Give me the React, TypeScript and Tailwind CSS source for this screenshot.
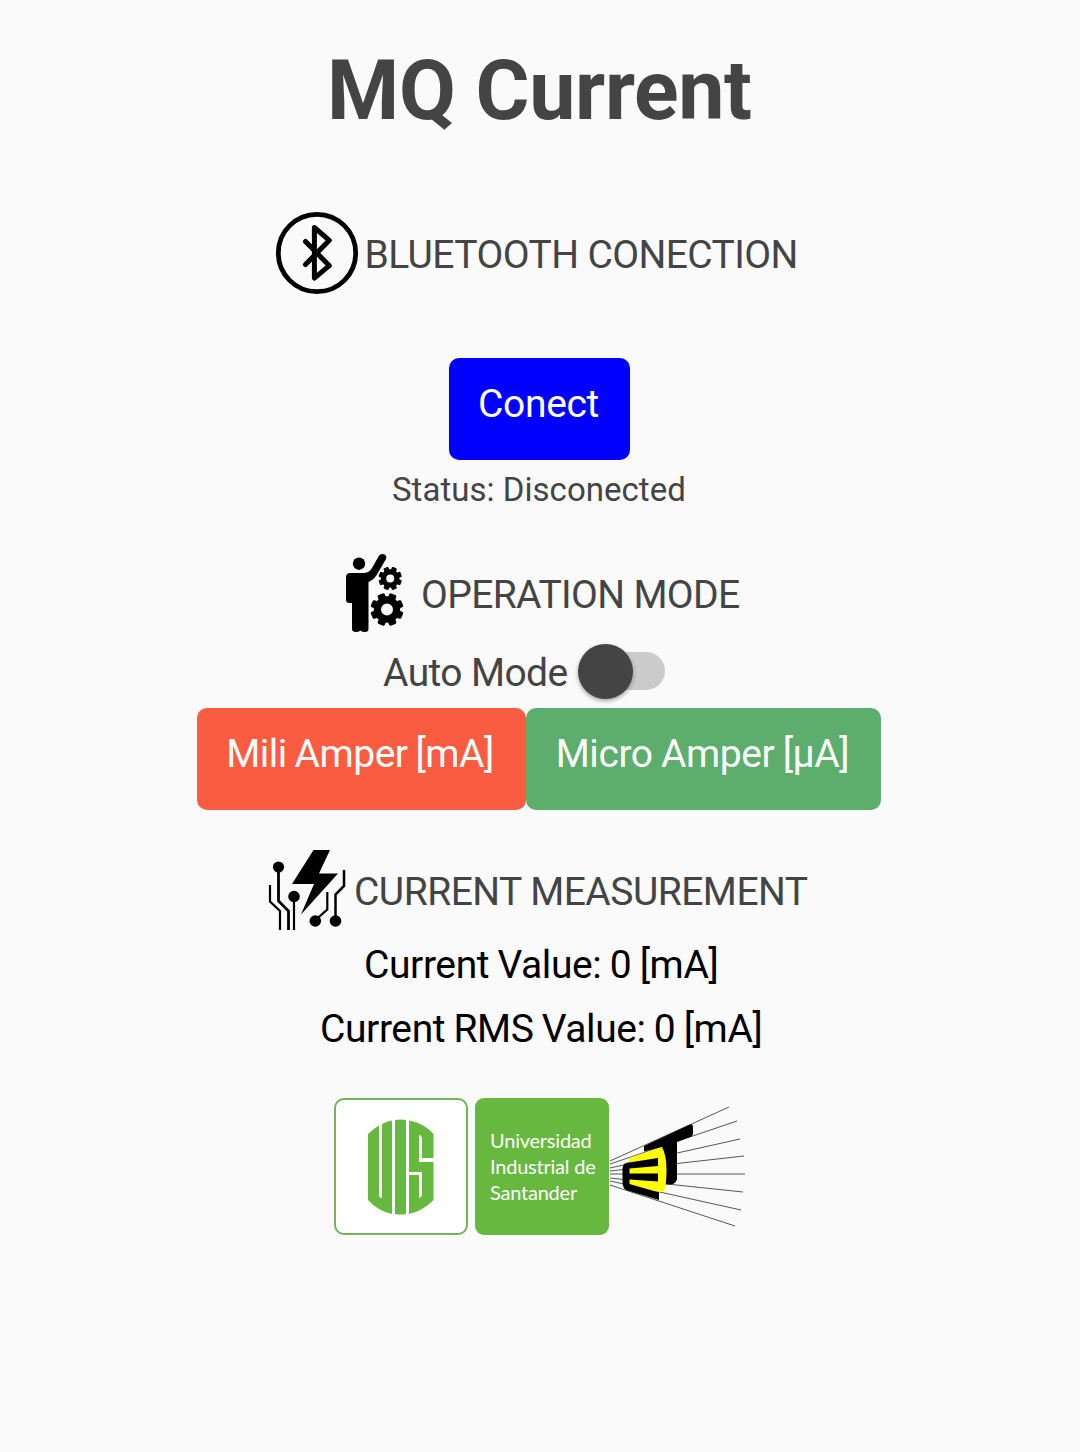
import React from "react";

function BluetoothIcon() {
  return (
    <svg width="84" height="84" viewBox="0 0 84 84" fill="none" stroke="#000" className="shrink-0">
      <circle cx="42" cy="42" r="38.7" strokeWidth="4.8" />
      <path d="M30.5 30.5 L54.3 54.7 L39.4 67.2 V16.5 L54.3 29.3 L30.5 53.5" strokeWidth="5" strokeLinejoin="round" strokeLinecap="round" />
    </svg>
  );
}

function Gear({ cx, cy, r, hole }: { cx: number; cy: number; r: number; hole: number }) {
  return (
    <g transform={`translate(${cx} ${cy})`}>
      <circle r={(r * 0.8 + hole) / 2} fill="none" stroke="#000" strokeWidth={r * 0.8 - hole} />
      {[22.5, 67.5, 112.5, 157.5, 202.5, 247.5, 292.5, 337.5].map((a) => (
        <rect key={a} x={-r * 0.23} y={-r} width={r * 0.46} height={r * 0.4} rx={r * 0.1} transform={`rotate(${a})`} />
      ))}
    </g>
  );
}

function OperatorIcon() {
  return (
    <svg width="60" height="80" viewBox="0 0 60 80" className="shrink-0">
      <circle cx="14" cy="10.7" r="6.2" />
      <path d="M5 20 H17 C23 20 25 18 27 15 L33.5 3.5 C36 -1 43 1 41 6 L34 18 C31 24 28 27 23.5 29 V76 Q23.5 79 20 79 Q17 79 15.5 77.5 Q13.5 79 11 79 Q7 79 7 76 V50 H4.5 Q1 50 1 47 V25 Q1 20 5 20 Z" />
      <Gear cx={45.2} cy={25.5} r={11.7} hole={4} />
      <Gear cx={42} cy={56.5} r={16.5} hole={6} />
    </svg>
  );
}

function CircuitIcon() {
  return (
    <svg width="80" height="82" viewBox="0 1 80 82" className="shrink-0">
      <path d="M45.5 1 H62 L51 24.5 H70 L33 65.5 L46 35 H24 Z" />
      <g fill="none" stroke="#000" strokeWidth="2.2">
        <path d="M2 36 V52.5 L12 62 V81" />
        <path d="M10.5 18 V52 L20.5 62 V81" strokeWidth="2.8" />
        <path d="M26 47 V81" />
        <path d="M47.5 71 L59.3 60.5 V43" />
        <path d="M67.5 72 V45.5 L76 37 V21" strokeWidth="2.5" />
      </g>
      <circle cx="10.5" cy="18" r="5.6" />
      <circle cx="26" cy="47.5" r="5.8" />
      <circle cx="47.3" cy="72" r="5.8" />
      <circle cx="67.5" cy="72" r="5.8" />
    </svg>
  );
}

function UisLogo() {
  return (
    <svg width="66" height="96" viewBox="0 0 66 96" fill="#67b83e">
      <path d="M0 15 Q5 10 11 6.5 V76 Q11 79 14 79 V5 Q19 2 24 1.5 V95 Q10 92 0 81 Z" />
      <path d="M27 1 Q32 0 38 1 V95 Q32 96 27 95 Z" />
      <path d="M41 1.5 Q56 4 65.5 15 V39 H54 V20 Q54 16.5 51 16 V43 H65.5 V81 Q55 92 41 95 V56 H51 V79 Q54 78 54 75 V53 H41 Z" />
    </svg>
  );
}

function LanternLogo() {
  return (
    <svg width="140" height="122" viewBox="0 0 140 122" className="shrink-0">
      <path
        d="M1 56 L120 2 M1 59 L128 16 M1 63 L131 34 M1 66 L135 51 M1 69 L136 69 M1 73 L134 87 M1 76 L132 105 M1 80 L126 121"
        fill="none"
        stroke="#111"
        strokeWidth="0.7"
      />
      <path d="M35 41 L80 20 Q84 18 84 22 V28 Q84 31 81 32 L68 37 V74 Q67 79 61 79.5 L53 79 V42 L35 46.5 Z" />
      <path d="M16 58.5 L50 48 V95 L17 85 Q13.5 83 13.5 76 V64 Q13.5 60 16 58.5 Z" />
      <path d="M20 53 L53 42 Q57.500 50 57.500 65 Q57.5 80 55 86 Q52 88 45 86 L20.5 79 V74.5 L49 76.5 V68.5 L20.5 68.5 V63.5 L49 61 V53 L20 57.5 Z" fill="#ff0" />
    </svg>
  );
}

export default function App() {
  return (
    <main className="flex h-[1452px] w-[1080px] flex-col overflow-hidden bg-[#fafafa] font-['Roboto',sans-serif] text-[39px] whitespace-nowrap text-[#444]">
      <h1 className="h-[211px] pl-[327px] text-[82.5px] leading-[181px] font-bold tracking-[-0.35px]">MQ Current</h1>

      <section className="flex h-[147px] pl-[275px]">
        <BluetoothIcon />
        <h2 className="ml-[5.5px] leading-[89px] tracking-[-0.58px]">BLUETOOTH CONECTION</h2>
      </section>

      <button className="ml-[449px] flex h-[102px] w-[181px] justify-center rounded-[10px] bg-[#0000ff] pr-[2px] leading-[92px] tracking-[-0.35px] text-white">
        Conect
      </button>
      <p className="h-[93px] pl-[392px] text-[33px] leading-[59px] tracking-[0.03px]">Status: Disconected</p>

      <section className="flex h-[90px] pl-[345px]">
        <OperatorIcon />
        <h2 className="ml-[16px] leading-[84px] tracking-[-0.64px]">OPERATION MODE</h2>
      </section>

      <div className="flex h-[65px] pl-[383px]">
        <span className="leading-[60px] tracking-[-0.6px]">Auto Mode</span>
        <div role="switch" aria-checked="false" className="mt-[9px] mr-[415px] ml-auto flex h-[38px] w-[87.5px] items-center rounded-full bg-gradient-to-r from-transparent from-20% to-[#cbcbcb] to-20%">
          <span className="size-[55px] shrink-0 rounded-full bg-[#444] shadow-[0_2px_4px_rgba(0,0,0,0.35)]" />
        </div>
      </div>

      <div className="flex h-[142px] pl-[197px] text-white">
        <button className="flex h-[102px] w-[329px] justify-center rounded-[10px] bg-[#f95c40] pr-[3px] leading-[92px] tracking-[-0.5px] [word-spacing:-1.2px]">Mili Amper [mA]</button>
        <button className="flex h-[102px] w-[355px] justify-center rounded-[10px] bg-[#5dad6c] pr-[2px] leading-[92px] tracking-[-0.4px] [word-spacing:-1px]">Micro Amper [µA]</button>
      </div>

      <section className="flex h-[83px] pl-[268px]">
        <CircuitIcon />
        <h2 className="ml-[6px] leading-[85px] tracking-[-0.52px]">CURRENT MEASUREMENT</h2>
      </section>
      <p className="h-16 pl-[364px] leading-[65px] tracking-[-0.4px] text-black [word-spacing:-0.9px]">Current Value: 0 [mA]</p>
      <p className="h-[101px] pl-[320px] leading-[65px] tracking-[-0.4px] text-black [word-spacing:-1px]">Current RMS Value: 0 [mA]</p>

      <footer className="flex h-[137px] pl-[334px]">
        <div className="flex w-[134px] items-center justify-center rounded-[10px] border-2 border-[#74b35a] bg-white">
          <UisLogo />
        </div>
        <div className="ml-[7px] w-[134px] rounded-[9px] bg-[#67b83e] pt-[29px] pl-[15px] font-['Lato',sans-serif] text-[20px] leading-[26px] tracking-[-0.22px] text-white">
          <p>Universidad</p>
          <p>Industrial de</p>
          <p>Santander</p>
        </div>
        <div className="pt-[7px]">
          <LanternLogo />
        </div>
      </footer>
    </main>
  );
}
